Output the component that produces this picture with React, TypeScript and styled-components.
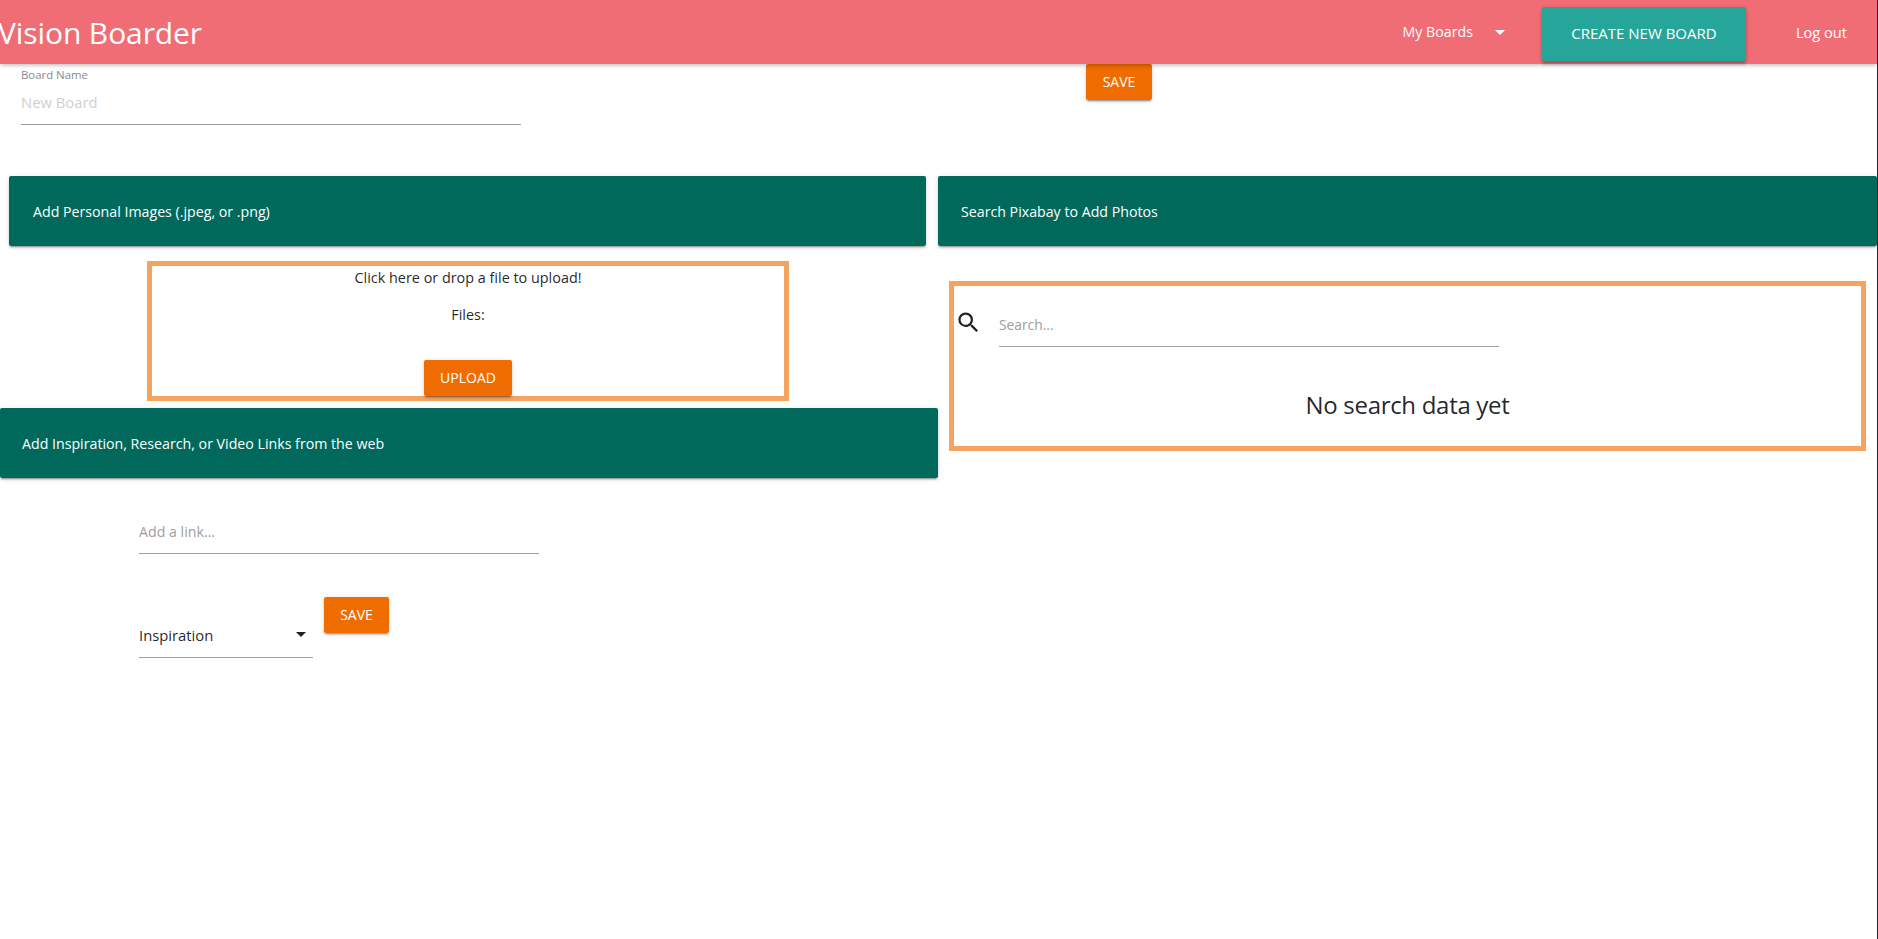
import React from 'react';
import styled, { createGlobalStyle } from 'styled-components';

const GlobalStyle = createGlobalStyle`
  html, body {
    margin: 0;
    padding: 0;
    background: #1d2b36;
    overflow: hidden;
  }
  body {
    font-family: "Open Sans", "Noto Sans", "Liberation Sans", sans-serif;
    color: rgba(0, 0, 0, 0.87);
  }
`;

const Page = styled.div`
  width: 1877px;
  height: 939px;
  background: #fff;
`;

const AppBar = styled.header`
  position: relative;
  z-index: 2;
  height: 64px;
  display: flex;
  align-items: center;
  background: #f16d75;
  color: #fff;
  box-shadow: 0 2px 4px -1px rgba(0,0,0,.2), 0 1px 5px 0 rgba(0,0,0,.12);
`;

const Title = styled.div`
  flex: 1;
  margin-left: -2px;
  font-size: 30px;
  font-weight: 400;
  letter-spacing: -0.1px;
  white-space: nowrap;
`;

const NavLabel = styled.div`
  font-size: 14.2px;
  margin-top: -1px;
`;

const ArrowDown = styled.span<{ $color: string }>`
  display: block;
  width: 0;
  height: 0;
  border-left: 5px solid transparent;
  border-right: 5px solid transparent;
  border-top: 5px solid ${(p) => p.$color};
`;

const MyBoards = styled.div`
  display: flex;
  align-items: center;
  gap: 22px;
  margin-right: 37px;
`;

const CreateButton = styled.button`
  width: 204px;
  height: 54px;
  margin: 4px 50px 0 0;
  padding: 0 0 2px;
  border: 0;
  border-radius: 2px;
  background: #26a69a;
  color: #fff;
  font: 400 15px "Open Sans", sans-serif;
  box-shadow: 0 3px 3px rgba(0,0,0,.2), 0 1px 5px rgba(0,0,0,.15);
`;

const Logout = styled(NavLabel)`
  margin-right: 30px;
  font-size: 14.6px;
`;

const BoardRow = styled.div`
  height: 112px;
  display: flex;
  align-items: flex-start;
  padding-left: 21px;
`;

const BoardField = styled.div`
  width: 500px;
  height: 61px;
  border-bottom: 1px solid #9e9e9e;
  box-sizing: border-box;
`;

const BoardLabel = styled.div`
  font-size: 11.4px;
  line-height: 22px;
  color: #8a8a8a;
`;

const BoardPlaceholder = styled.div`
  font-size: 14.8px;
  line-height: 32px;
  color: #cfcfcf;
`;

const OrangeButton = styled.button<{ $width?: number }>`
  width: ${(p) => p.$width ?? 66}px;
  height: 36px;
  flex: none;
  padding: 0 0 2px;
  border: 0;
  border-radius: 2px;
  background: #ef6c00;
  color: #fff;
  font: 400 14px "Open Sans", sans-serif;
  box-shadow: 0 2px 2px rgba(0,0,0,.14), 0 3px 1px -2px rgba(0,0,0,.2), 0 1px 5px rgba(0,0,0,.12);
`;

const TopSave = styled(OrangeButton)`
  margin-left: 565px;
`;

const Columns = styled.div`
  display: grid;
  grid-template-columns: 938px 939px;
`;

const Column = styled.div`
  min-width: 0;
`;

const PanelBar = styled.div<{ $ml: number; $mr: number; $pad: number }>`
  height: 70px;
  margin: 0 ${(p) => p.$mr}px 0 ${(p) => p.$ml}px;
  padding-left: ${(p) => p.$pad}px;
  display: flex;
  align-items: center;
  border-radius: 2px;
  background: #00695c;
  color: #fff;
  font-size: 14.2px;
  box-shadow: 0 2px 2px rgba(0,0,0,.14), 0 3px 1px -2px rgba(0,0,0,.2), 0 1px 5px rgba(0,0,0,.12);
`;

const DropZone = styled.div`
  box-sizing: border-box;
  width: 642px;
  height: 140px;
  margin: 15px 0 7px 147px;
  border: 5px solid #f4a460;
  display: flex;
  flex-direction: column;
  align-items: center;
  font-size: 14.4px;
`;

const DropText = styled.div`
  line-height: 24px;
`;

const FilesText = styled(DropText)`
  margin-top: 13px;
  flex: 1;
`;

const LinkSection = styled.div`
  padding: 32px 0 0 139px;
`;

const LinkField = styled.div`
  width: 400px;
  height: 44px;
  box-sizing: border-box;
  border-bottom: 1px solid #9e9e9e;
  color: #9e9e9e;
  font-size: 14.2px;
  line-height: 44px;
`;

const SaveRow = styled.div`
  display: flex;
  align-items: flex-start;
  gap: 11px;
  margin-top: 43px;
`;

const SelectBox = styled.div`
  width: 174px;
  height: 48px;
  margin-top: 13px;
  box-sizing: border-box;
  padding: 2px 7px 0 0;
  display: flex;
  align-items: center;
  justify-content: space-between;
  border-bottom: 1px solid #9e9e9e;
  font-size: 14.8px;
`;

const SearchBox = styled.div`
  box-sizing: border-box;
  width: 917px;
  height: 170px;
  margin: 35px 0 0 11px;
  border: 5px solid #f4a460;
`;

const SearchRow = styled.div`
  display: flex;
  align-items: flex-start;
  padding: 14px 0 0 1px;
`;

const SearchGlyph = styled.svg`
  flex: none;
  margin-top: 9px;
`;

const SearchField = styled.div`
  width: 500px;
  height: 47px;
  margin-left: 17px;
  box-sizing: border-box;
  border-bottom: 1px solid #9e9e9e;
  color: #9e9e9e;
  font-size: 13.8px;
  line-height: 50px;
`;

const EmptyText = styled.div`
  margin-top: 41px;
  text-align: center;
  font-size: 24px;
  font-weight: 400;
  letter-spacing: -0.3px;
  line-height: 34px;
`;

const SearchIcon = () => (
  <SearchGlyph width="27" height="27" viewBox="0 0 24 24" fill="#212121">
    <path d="M15.5 14h-.79l-.28-.27A6.47 6.47 0 0 0 16 9.5 6.5 6.5 0 1 0 9.5 16c1.61 0 3.09-.59 4.23-1.57l.27.28v.79l5 4.99L20.49 19l-4.99-5zm-6 0C7.01 14 5 11.99 5 9.5S7.01 5 9.5 5 14 7.01 14 9.5 11.99 14 9.5 14z" />
  </SearchGlyph>
);

const App: React.FC = () => {
  return (
    <Page>
      <GlobalStyle />
      <AppBar>
        <Title>Vision Boarder</Title>
        <MyBoards>
          <NavLabel>My Boards</NavLabel>
          <ArrowDown $color="#fff" />
        </MyBoards>
        <CreateButton>CREATE NEW BOARD</CreateButton>
        <Logout>Log out</Logout>
      </AppBar>
      <BoardRow>
        <BoardField>
          <BoardLabel>Board Name</BoardLabel>
          <BoardPlaceholder>New Board</BoardPlaceholder>
        </BoardField>
        <TopSave>SAVE</TopSave>
      </BoardRow>
      <Columns>
        <Column>
          <PanelBar $ml={9} $mr={12} $pad={24}>Add Personal Images (.jpeg, or .png)</PanelBar>
          <DropZone>
            <DropText>Click here or drop a file to upload!</DropText>
            <FilesText>Files:</FilesText>
            <OrangeButton $width={88}>UPLOAD</OrangeButton>
          </DropZone>
          <PanelBar $ml={0} $mr={0} $pad={22}>Add Inspiration, Research, or Video Links from the web</PanelBar>
          <LinkSection>
            <LinkField>Add a link...</LinkField>
            <SaveRow>
              <SelectBox>
                Inspiration
                <ArrowDown $color="#212121" />
              </SelectBox>
              <OrangeButton $width={65}>SAVE</OrangeButton>
            </SaveRow>
          </LinkSection>
        </Column>
        <Column>
          <PanelBar $ml={0} $mr={0} $pad={23}>Search Pixabay to Add Photos</PanelBar>
          <SearchBox>
            <SearchRow>
              <SearchIcon />
              <SearchField>Search...</SearchField>
            </SearchRow>
            <EmptyText>No search data yet</EmptyText>
          </SearchBox>
        </Column>
      </Columns>
    </Page>
  );
};

export default App;
